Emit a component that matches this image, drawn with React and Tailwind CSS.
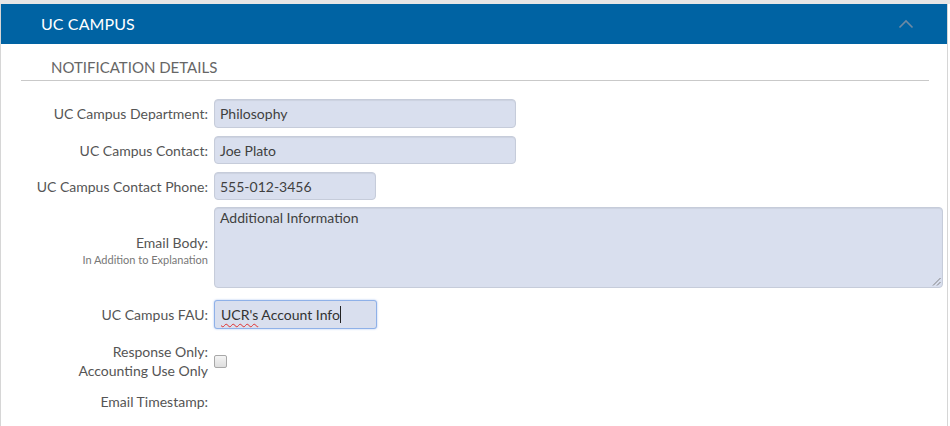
import React from "react";

const inputCls =
  "h-[28px] rounded-[4px] border border-[#c6ccda] bg-[#d9dfee] px-[5px] flex items-center text-[14px] text-[#3f3f3f] shadow-[inset_0_1px_1px_rgba(0,0,0,0.06)]";

function Row({ label, children, className = "" }) {
  return (
    <div className={"flex items-center " + className}>
      <div className="w-[193px] pr-[6px] text-right text-[14px] leading-[19px] text-[#555]">{label}</div>
      {children}
    </div>
  );
}

export default function App() {
  return (
    <div
      className="w-[950px] h-[426px] overflow-hidden bg-white"
      style={{ fontFamily: "Lato, 'Open Sans', 'Liberation Sans', sans-serif" }}
    >
      <div className="h-[4px] bg-[#e6e6e6]" />
      <div className="w-[948px] h-[422px] border-l border-r border-[#d6d6d6]">
        <div className="h-[40px] bg-[#0063a3] flex items-center justify-between pl-[40px] pr-[33px]">
          <span className="text-white text-[16px] tracking-[0.1px]">UC CAMPUS</span>
          <svg width="16" height="10" viewBox="0 0 16 10">
            <polyline points="1.5,8.5 8,2 14.5,8.5" fill="none" stroke="#6f8aa3" strokeWidth="1.6" />
          </svg>
        </div>
        <div className="pl-[20px] pr-[4px]">
          <div className="w-[908px] border-b border-[#c9c9c9] pl-[30px] pt-[15px] pb-[4px] text-[15px] leading-[17px] text-[#666]">
            NOTIFICATION DETAILS
          </div>
          <div className="pt-[18px] flex flex-col">
            <Row label="UC Campus Department:">
              <div className={inputCls + " w-[302px] h-[29px]"}>Philosophy</div>
            </Row>
            <Row label="UC Campus Contact:" className="mt-[8px]">
              <div className={inputCls + " w-[302px]"}>Joe Plato</div>
            </Row>
            <Row label="UC Campus Contact Phone:" className="mt-[8px]">
              <div className={inputCls + " w-[162px]"}>555-012-3456</div>
            </Row>
            <div className="flex items-start mt-[7px]">
              <div className="w-[193px] pr-[6px] text-right pt-[26px]">
                <div className="text-[14px] leading-[19px] text-[#555]">Email Body:</div>
                <div className="text-[11px] leading-[16px] text-[#777]">In Addition to Explanation</div>
              </div>
              <div className="relative w-[729px] h-[81px] rounded-[4px] border border-[#c6ccda] bg-[#d9dfee] px-[5px] pt-0 text-[14px] leading-[19px] text-[#3f3f3f] shadow-[inset_0_1px_1px_rgba(0,0,0,0.06)]">
                Additional Information
                <svg className="absolute right-[1px] bottom-[1px]" width="9" height="9" viewBox="0 0 9 9">
                  <line x1="8.5" y1="1" x2="1" y2="8.5" stroke="#777" strokeWidth="0.9" />
                  <line x1="8.5" y1="5" x2="5" y2="8.5" stroke="#777" strokeWidth="0.9" />
                </svg>
              </div>
            </div>
            <Row label="UC Campus FAU:" className="mt-[12px]">
              <div className="h-[29px] w-[163px] rounded-[3px] border border-[#8fb1e8] bg-[#d9dfee] px-[6px] flex items-center text-[14px] text-[#333] shadow-[0_0_2px_rgba(90,140,230,0.6)]">
                <span className="underline decoration-wavy decoration-[#e03030] decoration-[1px] underline-offset-[3px]">UCR's</span>
                <span>&nbsp;Account Info</span>
                <span className="inline-block w-[1px] h-[17px] bg-[#222]" />
              </div>
            </Row>
            <div className="flex items-center mt-[13px]">
              <div className="w-[193px] pr-[6px] text-right text-[14px] leading-[19px] text-[#555]">
                <div>Response Only:</div>
                <div>Accounting Use Only</div>
              </div>
              <div className="w-[13px] h-[13px] rounded-[2px] border border-[#a8a8a8] bg-gradient-to-b from-[#f4f4f4] to-[#dedede]" />
            </div>
            <Row label="Email Timestamp:" className="mt-[12px]">
              <div />
            </Row>
          </div>
        </div>
      </div>
    </div>
  );
}
